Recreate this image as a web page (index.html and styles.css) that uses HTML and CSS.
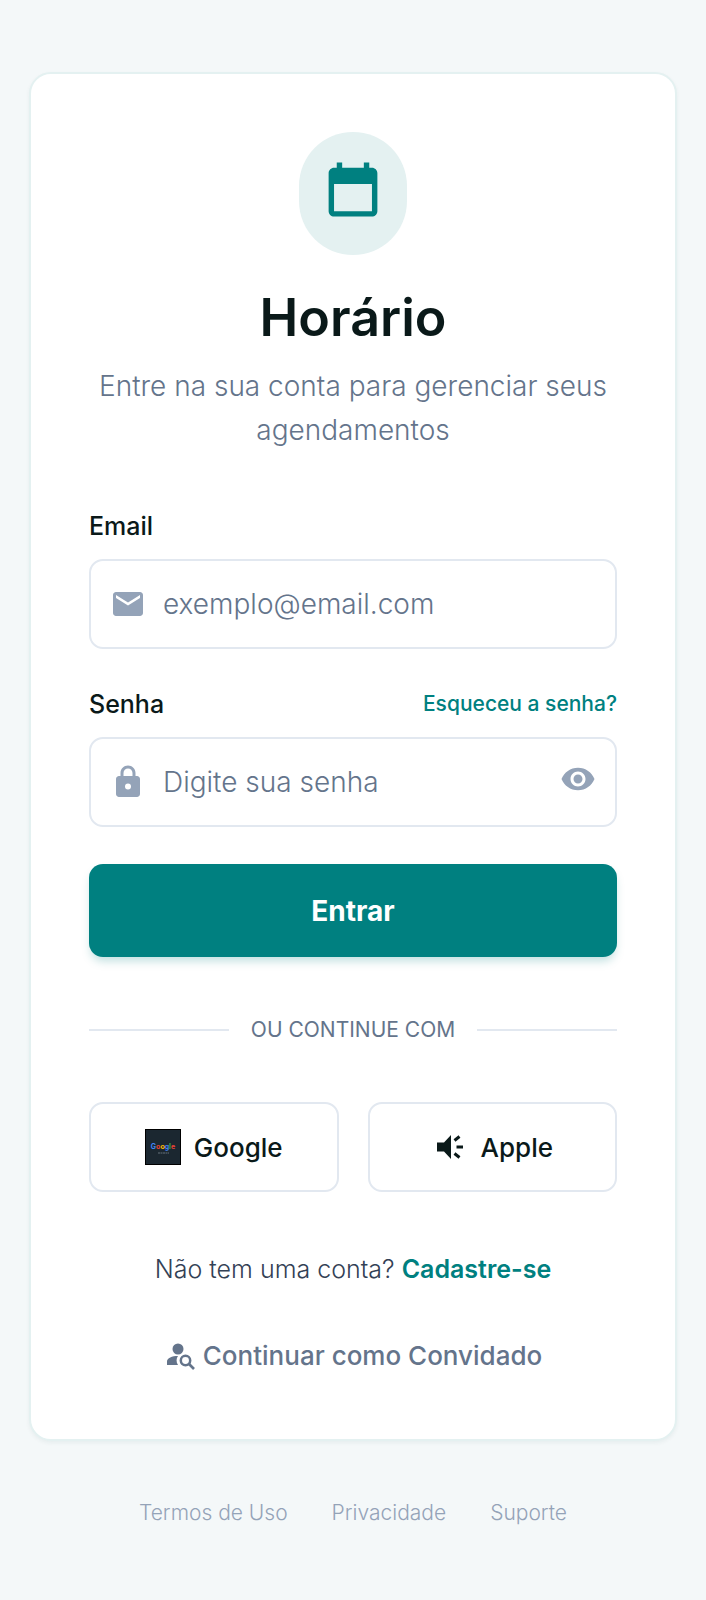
FILE: index.html
```html
<!DOCTYPE html>
<html lang="pt-BR">
<head>
  <meta charset="UTF-8">
  <meta name="viewport" content="width=device-width, initial-scale=1.0">
  <title>Horário - Entrar</title>
  <link rel="stylesheet" href="styles.css">
</head>
<body>
  <main class="card">
    <header class="header">
      <div class="logo">
        <svg viewBox="0 0 24 24" width="66" height="65" aria-hidden="true">
          <path fill="currentColor" fill-rule="evenodd" d="M6 2h2v2h8V2h2v2h1c1.1 0 2 .9 2 2v14c0 1.1-.9 2-2 2H5c-1.1 0-2-.9-2-2V6c0-1.1.9-2 2-2h1zM5 10v10h14V10z"/>
        </svg>
      </div>
      <h1>Horário</h1>
      <p class="subtitle">Entre na sua conta para gerenciar seus agendamentos</p>
    </header>

    <form class="form">
      <div class="field">
        <div class="field-top">
          <label for="email">Email</label>
        </div>
        <div class="input-box">
          <svg viewBox="0 0 24 24" width="36" height="36" aria-hidden="true">
            <path fill="currentColor" d="M20 4H4c-1.1 0-2 .9-2 2v12c0 1.1.9 2 2 2h16c1.1 0 2-.9 2-2V6c0-1.1-.9-2-2-2zm0 4-8 5-8-5V6l8 5 8-5z"/>
          </svg>
          <input type="email" id="email" name="email" placeholder="exemplo@email.com">
        </div>
      </div>

      <div class="field">
        <div class="field-top">
          <label for="senha">Senha</label>
          <a class="forgot" href="#">Esqueceu a senha?</a>
        </div>
        <div class="input-box">
          <svg viewBox="0 0 24 24" width="36" height="36" aria-hidden="true">
            <path fill="currentColor" fill-rule="evenodd" d="M18 8h-1V6c0-2.760-2.240-5-5-5S7 3.240 7 6v2H6c-1.100 0-2 .9-2 2v10c0 1.100.9 2 2 2h12c1.100 0 2-.9 2-2V10c0-1.100-.9-2-2-2zM9 8V6c0-1.660 1.340-3 3-3s3 1.340 3 3v2zm3 5a2 2 0 1 1 0 4 2 2 0 0 1 0-4z"/>
          </svg>
          <input type="password" id="senha" name="senha" placeholder="Digite sua senha">
          <button type="button" class="toggle" aria-label="Mostrar senha">
            <svg viewBox="0 0 24 24" width="36" height="36" aria-hidden="true">
              <path fill="currentColor" d="M12 4.500C7 4.500 2.730 7.610 1 12c1.730 4.390 6 7.500 11 7.500s9.270-3.110 11-7.500c-1.730-4.390-6-7.500-11-7.500zM12 17c-2.760 0-5-2.240-5-5s2.240-5 5-5 5 2.240 5 5-2.240 5-5 5zm0-8c-1.660 0-3 1.340-3 3s1.340 3 3 3 3-1.340 3-3-1.340-3-3-3z"/>
            </svg>
          </button>
        </div>
      </div>

      <button type="submit" class="submit">Entrar</button>
    </form>

    <div class="divider">OU CONTINUE COM</div>

    <div class="social">
      <button type="button">
        <svg viewBox="0 0 36 36" width="36" height="36" aria-hidden="true">
          <rect width="36" height="36" fill="#000"/>
          <rect x="1" y="1" width="34" height="34" fill="#1b2730"/>
          <text class="google-mark" x="18" y="20" text-anchor="middle"><tspan fill="#4285f4">G</tspan><tspan fill="#ea4335">o</tspan><tspan fill="#fbbc05">o</tspan><tspan fill="#4285f4">g</tspan><tspan fill="#34a853">l</tspan><tspan fill="#ea4335">e</tspan></text>
          <path d="M13 24h11" stroke="#66727a" stroke-width="1" stroke-dasharray="2 .5"/>
        </svg>
        Google
      </button>
      <button type="button">
        <svg viewBox="0 0 36 36" width="36" height="36" aria-hidden="true">
          <path fill="currentColor" d="M5 13.500h7l7-7.500v24l-7-7.500H5z"/>
          <path fill="none" stroke="currentColor" stroke-width="3" d="M24.500 18H31M22.500 11.500l5-4M22.500 24.500l5 4"/>
        </svg>
        Apple
      </button>
    </div>

    <p class="signup">Não tem uma conta? <a href="#">Cadastre-se</a></p>

    <a class="guest" href="#">
      <svg viewBox="0 0 32 32" width="32" height="32" aria-hidden="true">
        <circle cx="14" cy="9" r="5.500" fill="currentColor"/>
        <path fill="currentColor" d="M3 25v-3.500c0-3.500 5-5.500 11-5.500-1.800 2.500-2 6 0 9z"/>
        <circle cx="21.500" cy="20.500" r="4.700" fill="none" stroke="currentColor" stroke-width="2.500"/>
        <path d="M24.500 23.500l5.500 5.500" stroke="currentColor" stroke-width="2.700"/>
      </svg>
      Continuar como Convidado
    </a>
  </main>

  <footer class="footer">
    <a href="#">Termos de Uso</a>
    <a href="#">Privacidade</a>
    <a href="#">Suporte</a>
  </footer>
</body>
</html>
```
FILE: styles.css
```css
* {
  box-sizing: border-box;
}

body {
  font-family: Inter, "Liberation Sans", sans-serif;
  margin: 0;
  padding: 72px 29px;
  background-color: #f4f8f9;
  color: #0a1919;
}

h1,
p {
  margin: 0;
}

a {
  text-decoration: none;
}

svg {
  display: block;
  flex-shrink: 0;
}

button,
input {
  font-family: inherit;
}

button {
  cursor: pointer;
}

.card {
  padding: 58px;
  border: 2px solid #e4f1f1;
  border-radius: 22px;
  background-color: #fff;
  box-shadow: 0 2px 4px rgba(0, 60, 60, 0.06);
}

.header {
  display: flex;
  flex-direction: column;
  align-items: center;
  text-align: center;
}

.logo {
  padding: 25px 21px 33px;
  border-radius: 54px;
  background-color: #e4f1f1;
  color: #008080;
}

h1 {
  margin-top: 33px;
  font-size: 52px;
  line-height: 60px;
  font-weight: 600;
}

.subtitle {
  margin-top: 16px;
  font-size: 28px;
  line-height: 44px;
  font-weight: 300;
  color: #64748b;
}

.form {
  display: flex;
  flex-direction: column;
  gap: 37px;
  margin-top: 56px;
}

.field-top {
  display: flex;
  justify-content: space-between;
  align-items: center;
  margin-bottom: 15px;
  font-size: 25px;
  line-height: 36px;
  font-weight: 500;
}

.forgot {
  font-size: 21px;
  color: #008080;
}

.input-box {
  display: flex;
  align-items: center;
  gap: 17px;
  height: 90px;
  padding: 0 19px;
  border: 2px solid #e2e8f0;
  border-radius: 14px;
  color: #94a3b8;
}

.input-box input {
  flex: 1;
  min-width: 0;
  height: 100%;
  padding: 0;
  border: none;
  outline: none;
  background: none;
  font-size: 28px;
  font-weight: 300;
  color: #0a1919;
}

.input-box input::placeholder {
  color: #64748b;
}

.toggle {
  padding: 0 0 6px;
  border: none;
  background: none;
  color: inherit;
}

.submit {
  height: 93px;
  border: none;
  border-radius: 14px;
  background-color: #008080;
  box-shadow: 0 6px 10px -2px rgba(0, 128, 128, 0.25);
  font-size: 28px;
  font-weight: 700;
  color: #fff;
}

.divider {
  display: flex;
  align-items: center;
  gap: 22px;
  margin: 58px 0 57px;
  font-size: 21px;
  line-height: 30px;
  color: #64748b;
}

.divider::before,
.divider::after {
  content: "";
  flex: 1;
  height: 2px;
  background-color: #e2e8f0;
}

.social {
  display: grid;
  grid-template-columns: 1fr 1fr;
  gap: 29px;
}

.social button {
  display: flex;
  justify-content: center;
  align-items: center;
  gap: 13px;
  height: 90px;
  border: 2px solid #e2e8f0;
  border-radius: 14px;
  background: none;
  font-size: 26px;
  font-weight: 500;
  color: #0a1919;
}

.google-mark {
  font-size: 7px;
  font-weight: 700;
}

.signup {
  margin-top: 59px;
  font-size: 25px;
  line-height: 36px;
  font-weight: 300;
  text-align: center;
  color: #334155;
}

.signup a {
  font-weight: 600;
  color: #008080;
}

.guest {
  display: flex;
  justify-content: center;
  align-items: center;
  gap: 7px;
  margin-top: 44px;
  padding: 7px 0;
  font-size: 26px;
  line-height: 36px;
  font-weight: 500;
  color: #64748b;
}

.footer {
  display: flex;
  justify-content: center;
  gap: 44px;
  margin-top: 57px;
  font-size: 21px;
  line-height: 30px;
  font-weight: 300;
}

.footer a {
  color: #94a3b8;
}
```
